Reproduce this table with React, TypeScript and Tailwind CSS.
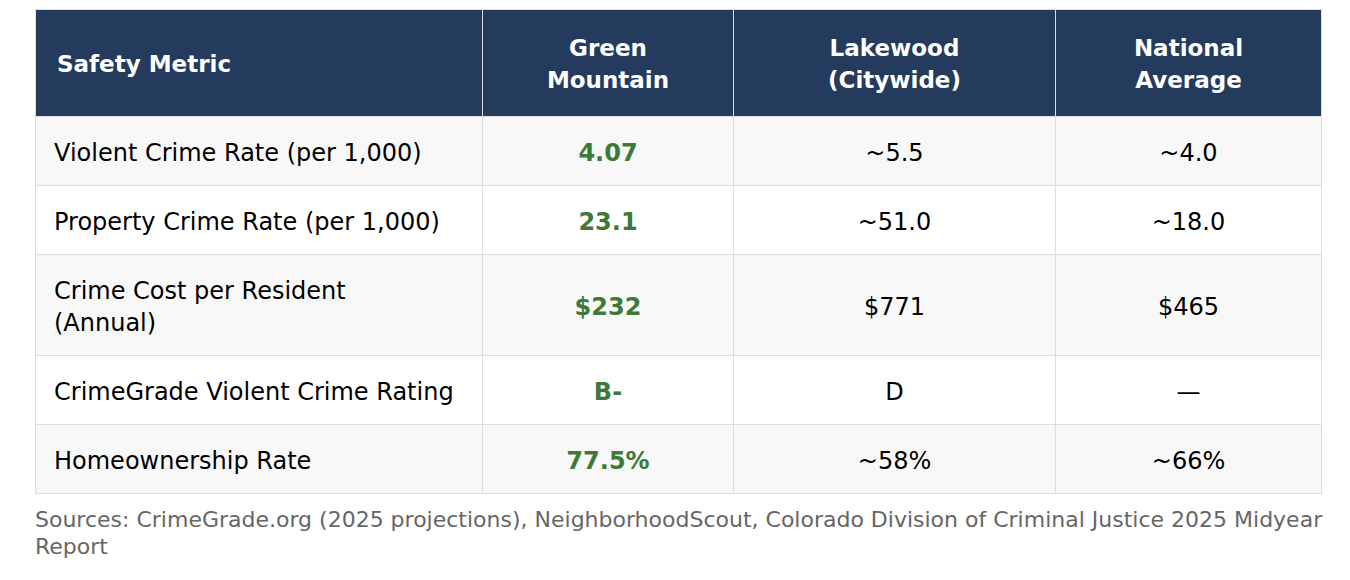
import React from 'react';

interface Row {
  metric: React.ReactNode;
  green: string;
  lakewood: string;
  national: string;
}

const rows: Row[] = [
  { metric: 'Violent Crime Rate (per 1,000)', green: '4.07', lakewood: '~5.5', national: '~4.0' },
  { metric: 'Property Crime Rate (per 1,000)', green: '23.1', lakewood: '~51.0', national: '~18.0' },
  { metric: <>Crime Cost per Resident<br />(Annual)</>, green: '$232', lakewood: '$771', national: '$465' },
  { metric: 'CrimeGrade Violent Crime Rating', green: 'B-', lakewood: 'D', national: '—' },
  { metric: 'Homeownership Rate', green: '77.5%', lakewood: '~58%', national: '~66%' },
];

const App = () => {
  return (
    <div className="bg-white w-[1350px] h-[580px] pt-[9px] pl-[35px] font-['DejaVu_Sans','Liberation_Sans',sans-serif]">
      <table className="w-[1286px] border-collapse table-fixed border border-[#dddddd] text-[24px] leading-[32px]">
        <colgroup>
          <col className="w-[447px]" />
          <col className="w-[251px]" />
          <col className="w-[322px]" />
          <col className="w-[266px]" />
        </colgroup>
        <thead>
          <tr className="bg-[#243b5e] text-white h-[107px] text-[23px]">
            <th className="text-left font-bold px-[21px] pt-[2px] border border-[#dddddd]">Safety Metric</th>
            <th className="text-center font-bold px-[18px] pt-[2px] border border-[#dddddd]">Green<br />Mountain</th>
            <th className="text-center font-bold px-[18px] pt-[2px] border border-[#dddddd]">Lakewood<br />(Citywide)</th>
            <th className="text-center font-bold px-[18px] pt-[2px] border border-[#dddddd]">National<br />Average</th>
          </tr>
        </thead>
        <tbody>
          {rows.map((row, i) => (
            <tr key={i} className={i % 2 === 0 ? 'bg-[#f8f8f8]' : 'bg-white'}>
              <td className="px-[18px] pt-[20px] pb-[16px] border border-[#dddddd] text-black">{row.metric}</td>
              <td className="pt-[20px] pb-[16px] text-center font-bold text-[#3d7a37] border border-[#dddddd]">{row.green}</td>
              <td className="pt-[20px] pb-[16px] text-center text-black border border-[#dddddd]">{row.lakewood}</td>
              <td className="pt-[20px] pb-[16px] text-center text-black border border-[#dddddd]">{row.national}</td>
            </tr>
          ))}
        </tbody>
      </table>
      <p className="mt-[12px] w-[1300px] text-[22px] leading-[27px] text-[#666666]">
        Sources: CrimeGrade.org (2025 projections), NeighborhoodScout, Colorado Division of Criminal Justice 2025 Midyear Report
      </p>
    </div>
  );
};

export default App;
